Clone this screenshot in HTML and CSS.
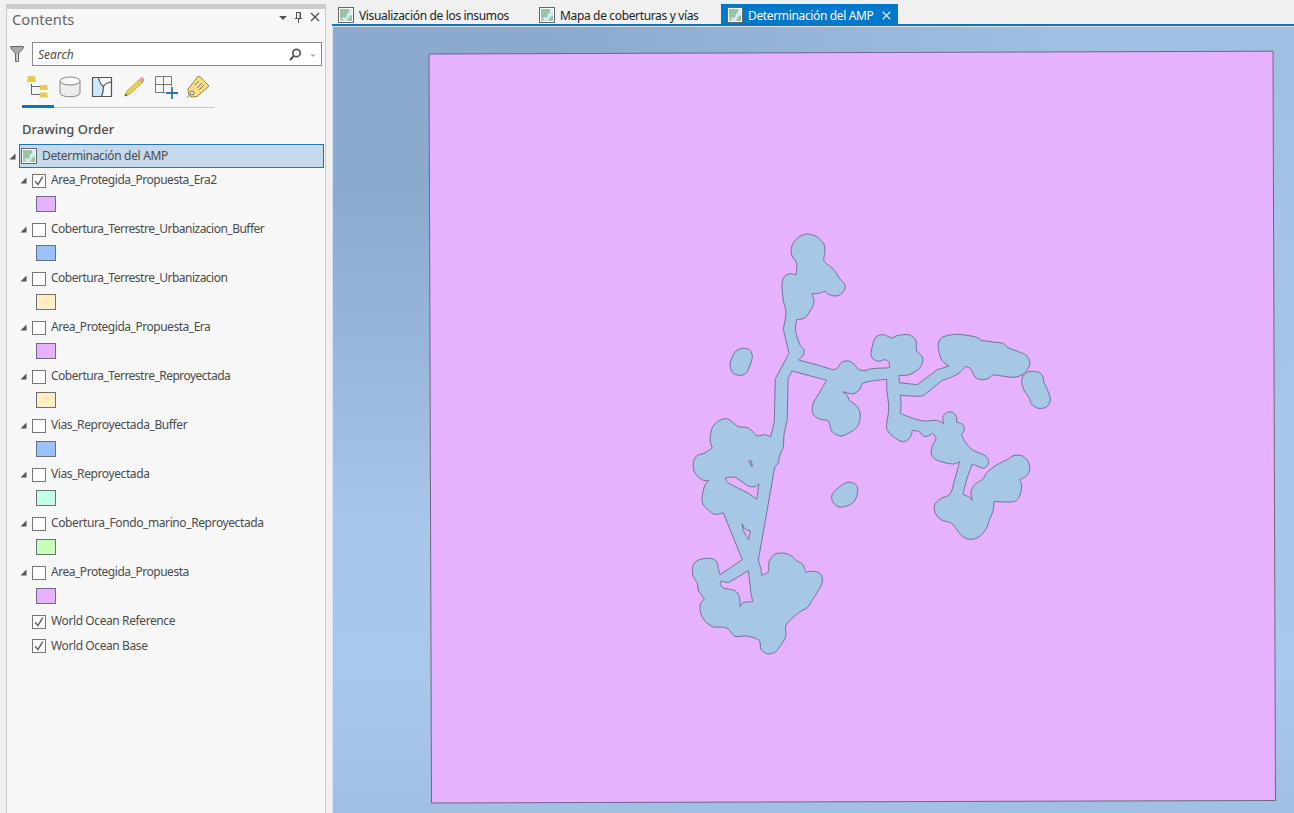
FILE: index.html
```html
<!DOCTYPE html>
<html lang="es">
<head>
<meta charset="utf-8">
<title>Determinación del AMP</title>
<link rel="stylesheet" href="styles.css">
</head>
<body>
<svg class="defs" width="0" height="0">
  <symbol id="map" viewBox="0 0 16 16">
    <rect x=".5" y=".5" width="15" height="15" fill="#fff" stroke="#666"/>
    <rect x="2" y="2" width="12" height="12" fill="#9dc3a4"/>
    <path d="M11 2h3v6l-3 2-2 4H6l-2-2 1-2 3 1 1-4 2-2z" fill="#d3edf5"/>
    <path d="M2 10l3 2v2H2z" fill="#b5d3b4"/>
  </symbol>
  <symbol id="tri" viewBox="0 0 7 7"><path d="M6.5 .5v6h-6z" fill="#555"/></symbol>
  <symbol id="check" viewBox="0 0 14 14"><path d="M3 7.2l3 3.3 4.7-7.8" fill="none" stroke="#666" stroke-width="1.5"/></symbol>
</svg>
<div class="app">
  <aside class="pane">
    <header class="pane-head">
      <h1>Contents</h1>
      <svg class="pane-btns" width="42" height="14" viewBox="0 0 42 14" fill="none" stroke="#555">
        <path d="M1 6h8l-4 4z" fill="#555" stroke="none"/>
        <path d="M18.5 2v6M22.5 2v6M18 2.5h5M17 8.5h7M20.500 9v4"/><path d="M22 2v6" />
        <path d="M33 3l8 8M41 3l-8 8" stroke-width="1.4"/>
      </svg>
    </header>
    <div class="search-row">
      <svg width="14" height="18" viewBox="0 0 14 18"><path d="M.7 1.5h12.600v1.500L8.500 8.500v8h-3v-8L.7 3z" fill="#aaa" stroke="#666"/><path d="M6.700 9h1v7h-1z" fill="#eee"/></svg>
      <div class="search">
        <span>Search</span>
        <svg width="28" height="14" viewBox="0 0 28 14" fill="none"><circle cx="8.500" cy="5" r="3.700" stroke="#555" stroke-width="1.700"/><path d="M5.800 8L2 12" stroke="#555" stroke-width="2"/><path d="M22.500 6.500h5l-2.500 2.500z" fill="#aaa"/></svg>
      </div>
    </div>
    <nav class="tools">
      <span class="tool active"><svg viewBox="0 0 24 24"><path d="M7.500 9v10.500H16M7.500 11.500H16" fill="none" stroke="#666"/><path d="M4 1h7l1 6H3zM16 10h7l1 5h-8.500zM16 17.500h7l1 5h-8.500z" fill="#e3cc52"/></svg></span>
      <span class="tool"><svg viewBox="0 0 24 24"><path d="M2 6v12c0 5 20 5 20 0V6" fill="#ececec" stroke="#888"/><ellipse cx="12" cy="6" rx="10" ry="4" fill="#f9f9f9" stroke="#888"/></svg></span>
      <span class="tool"><svg viewBox="0 0 24 24"><path d="M2.500 2.500h19v19h-19z" fill="#f8f8f8"/><path d="M2.500 2.500h6q1 6 5 8-1 6-2 11h-9z" fill="#cfe7fa"/><path d="M2.500 2.500h19v19h-19zM8.500 2.500q1 6 5 9 2-4 8-4.500M13.500 11.500q0 5-2 10" fill="none" stroke="#555" stroke-width="1.200"/></svg></span>
      <span class="tool"><svg viewBox="0 0 24 24"><path d="M3 21l2-5L17.500 4.500l3 3L8 19z" fill="#e6d152" stroke="#b7a341" stroke-width=".8"/><path d="M17.500 4.500l2-2q2 0 2.500 2.500l-1.500 2.500z" fill="#e5a7a0" stroke="#a66" stroke-width=".5"/><path d="M2.500 21.500l1-3 2 2z" fill="#555"/></svg></span>
      <span class="tool"><svg viewBox="0 0 24 24"><path d="M1.500 1.500h16v16h-16zM9.500 1.500v16M1.500 9.500h16" fill="none" stroke="#777"/><path d="M11 11h9v4h4v5h-4v4h-5v-4h-4z" fill="#f7f7f7"/><path d="M18 12v12M12 18h12" stroke="#2b7aa5" stroke-width="1.800"/></svg></span>
      <span class="tool"><svg viewBox="0 0 24 24"><path d="M2 14l.5 5.500 2.500 2.500 6-.5L23 11 22 10 14 1.500h-2z" fill="#f5dc86" stroke="#9b8541"/><circle cx="6" cy="18" r="2" fill="#fff" stroke="#666"/><path d="M5 19l-4 3.500M9 10l4-4M11 13l5-5M13 15l5-5" stroke="#777" fill="none"/></svg></span>
    </nav>
    <h2>Drawing Order</h2>
    <div class="root">
      <svg class="tri"><use href="#tri"/></svg>
      <div class="selected"><svg class="mapicon"><use href="#map"/></svg><span>Determinación del AMP</span></div>
    </div>
    <ul class="layers">
      <li><svg class="tri"><use href="#tri"/></svg><i class="box"><svg><use href="#check"/></svg></i><span>Area_Protegida_Propuesta_Era2</span></li>
      <li class="symbol"><b class="swatch pink"></b></li>
      <li><svg class="tri"><use href="#tri"/></svg><i class="box"></i><span class="tight">Cobertura_Terrestre_Urbanizacion_Buffer</span></li>
      <li class="symbol"><b class="swatch blue"></b></li>
      <li><svg class="tri"><use href="#tri"/></svg><i class="box"></i><span class="tight">Cobertura_Terrestre_Urbanizacion</span></li>
      <li class="symbol"><b class="swatch sand"></b></li>
      <li><svg class="tri"><use href="#tri"/></svg><i class="box"></i><span>Area_Protegida_Propuesta_Era</span></li>
      <li class="symbol"><b class="swatch pink"></b></li>
      <li><svg class="tri"><use href="#tri"/></svg><i class="box"></i><span class="tight">Cobertura_Terrestre_Reproyectada</span></li>
      <li class="symbol"><b class="swatch sand"></b></li>
      <li><svg class="tri"><use href="#tri"/></svg><i class="box"></i><span class="loose">Vias_Reproyectada_Buffer</span></li>
      <li class="symbol"><b class="swatch blue"></b></li>
      <li><svg class="tri"><use href="#tri"/></svg><i class="box"></i><span class="loose">Vias_Reproyectada</span></li>
      <li class="symbol"><b class="swatch mint"></b></li>
      <li><svg class="tri"><use href="#tri"/></svg><i class="box"></i><span class="loose">Cobertura_Fondo_marino_Reproyectada</span></li>
      <li class="symbol"><b class="swatch green"></b></li>
      <li><svg class="tri"><use href="#tri"/></svg><i class="box"></i><span>Area_Protegida_Propuesta</span></li>
      <li class="symbol"><b class="swatch pink"></b></li>
      <li class="leaf"><i class="box"><svg><use href="#check"/></svg></i><span class="loose">World Ocean Reference</span></li>
      <li class="leaf"><i class="box"><svg><use href="#check"/></svg></i><span class="loose">World Ocean Base</span></li>
    </ul>
  </aside>
  <main class="view">
    <div class="tabs">
      <div class="tab first"><svg class="mapicon"><use href="#map"/></svg><span>Visualización de los insumos</span></div>
      <div class="tab second"><svg class="mapicon"><use href="#map"/></svg><span>Mapa de coberturas y vías</span></div>
      <div class="tab current"><svg class="mapicon"><use href="#map"/></svg><span>Determinación del AMP</span><svg class="close" viewBox="0 0 9 9"><path d="M.7.7l7.600 7.600M8.300.7L.7 8.300" stroke="#d9ecfa" stroke-width="1.300"/></svg></div>
    </div>
    <svg class="canvas" viewBox="332 26 962 787">
      <defs>
        <linearGradient id="sea" x1="0" y1="0" x2="0" y2="1">
          <stop offset="0" stop-color="#a0c0e2"/><stop offset=".55" stop-color="#a7c6e9"/><stop offset=".82" stop-color="#a8c8ec"/><stop offset="1" stop-color="#a1bfe3"/>
        </linearGradient>
        <radialGradient id="deep" gradientUnits="userSpaceOnUse" cx="0" cy="0" r="1" gradientTransform="translate(380 70) scale(680 460)">
          <stop offset="0" stop-color="#8baacd"/><stop offset=".25" stop-color="#8baacd"/><stop offset="1" stop-color="#8baacd" stop-opacity="0"/>
        </radialGradient>
      </defs>
      <rect x="332" y="26" width="962" height="787" fill="url(#sea)"/>
      <rect x="332" y="26" width="962" height="787" fill="url(#deep)"/>
      <path d="M332 26.500H1294M332.500 26V813" stroke="#d5e2ef" fill="none"/>
      <path d="M429 54L1273 51.200 1275.500 800.500 431.500 803z" fill="#e6b1fd" stroke="#756582" stroke-width="1"/>
      <g id="features" stroke="#6b6983" stroke-width=".9" stroke-linejoin="round"></g>
    </svg>
  </main>
</div>
<script src="map.js"></script>
</body>
</html>
```
FILE: styles.css
```css
* { box-sizing: border-box; }
body { margin: 0; height: 813px; overflow: hidden; background: #f0f0f0; color: #4c4c4c; font: 12px "Noto Sans", "Open Sans", sans-serif; }
svg { display: block; flex: none; }
.defs { position: absolute; }
.app { display: flex; height: 813px; padding-left: 6px; }
.pane { width: 320px; margin-top: 4px; border: 1px solid #ccc; border-top: 5px solid #cbcbcb; border-bottom: 0; background: #f7f7f7; }
.pane-head { display: flex; justify-content: space-between; height: 33px; padding: 0 5px 0 5px; }
.pane-btns { margin-top: 1px; }
h1 { margin: 0; font-size: 14.7px; line-height: 20px; font-weight: 400; color: #666; }
.search-row { display: flex; align-items: center; gap: 7px; height: 24px; padding-left: 3px; }
.search-row > svg { margin-right: 1px; }
.search { display: flex; align-items: center; justify-content: space-between; width: 290px; height: 24px; padding: 1px 5px 0; border: 1px solid #8a8a8a; background: #fff; font-style: italic; font-size: 12px; }
.tools { display: flex; width: 192px; height: 42px; margin-left: 15px; padding-top: 9px; border-bottom: 1px solid #c6c6c6; }
.tool { width: 32px; height: 33px; padding-left: 4px; }
.tool svg { width: 24px; height: 24px; }
.tool.active { padding-left: 2px; border-bottom: 3px solid #0b76b7; }
h2 { margin: 0; padding: 11px 0 0 15px; height: 36px; line-height: 20px; font-size: 13px; font-weight: 500; }
.root { display: flex; align-items: center; gap: 3px; padding-left: 2px; height: 24px; }
.tri { width: 7px; height: 7px; }
.selected { display: flex; align-items: center; gap: 5px; width: 305px; height: 24px; padding: 0 0 1px 1px; border: 1px solid #1a78b6; background: #c5d9eb; letter-spacing: -.33px; }
.selected .mapicon { margin-top: 1px; }
.mapicon { width: 16px; height: 16px; }
.layers { margin: 0; padding: 0; list-style: none; }
.layers li { display: flex; align-items: center; height: 24.500px; padding-left: 13px; }
.layers span { margin: -1px 0 0 5px; letter-spacing: -.47px; }
.layers .tight { letter-spacing: -.51px; }
.layers .loose { letter-spacing: -.4px; }
.box { display: block; width: 14px; height: 14px; margin: 1px 0 0 5px; border: 1px solid #777; background: #fff; }
.box svg { width: 14px; height: 14px; margin: -1px; }
.layers .leaf { padding-left: 20px; }
.layers .symbol { padding: 0 0 2px 29px; }
.swatch { width: 20px; height: 16px; border: 1px solid #6e6e7a; }
.pink { background: #e6b1fd; }
.blue { background: #9ac1ff; }
.sand { background: #ffefc2; }
.mint { background: #c2ffe4; }
.green { background: #c6ffb9; }
.view { width: 962px; margin-left: 6px; }
.tabs { display: flex; height: 26px; padding-top: 4px; border-bottom: 2px solid #0b76bd; color: #222; letter-spacing: -.35px; }
.tab { display: flex; align-items: center; gap: 5px; height: 20px; padding: 2px 0 0 6px; white-space: nowrap; }
.first { width: 201px; }
.second { width: 188px; }
.current { width: 177px; color: #fff; background: #0078cc; }
.close { width: 9px; height: 9px; margin-left: 3px; }
.canvas { width: 962px; height: 787px; }
```
FILE: map.js
```js
// Vertex lists in map-view pixels, x y pairs.
const water = "#a7c7e7", area = "#e6b1fd";
const features = [
  [water, `808.3 234 816.7 236.7 824.3 245 824.7 253.3 824 260.7 833.3 269.3 840 279 844.7 284.3 844.7 289 840.7 294.3 835 296 828.3 294.3 825 291.3 819.3 293.3 812 293.7 814 302.3 810.7 310 805 317.7 796.7 319.7 795.3 329.7 800 345 804 350 803.3 355 798.7 360
   820 365.7 833.3 369.7 837.3 368.3 841.7 362.3 848.3 361 854.3 364.3 857.3 368.3 863.3 370.7 871.7 368.7 889.3 367.8
   889 362.3 885 359.7 879.3 361.3 873.3 359 871 354.3 872.7 345 876 337 883.3 334.7 891.7 338 896 336 908.3 334.7 915.7 340 916.7 351 922.7 357.7 920.7 366.7 915 371.7 908.3 375 899 375.3 899.3 382.7 917.3 384.7 936.7 370 949 366
   941.7 360 938 345 941.7 337.7 956.7 334.3 976.7 337.3 980.7 340.3 1003.3 343.3 1009 348 1026.7 355.7 1029.7 364.3 1023.3 374 1013.3 377.3 993.3 375 988.3 378.3 981.7 379.7 975 377 971 369 965.3 366.3 960 372.3 951.7 377 941.7 380.7 923.3 395.7 918.3 396.3 900.3 395.3 901 405 900.3 413.3 910 417.3 923.3 421 936.7 420.3 943.7 424
   943 416.7 947.3 412.3 953.3 412.7 956.7 417.7 956.3 422 963.3 425 964 431 961.3 434 965 441.7 971.7 449.3 986 456.3 988.7 462.3 984.7 468 980 467.3 972.3 464 966 481.7 963 494.3 968.3 496.7 972.3 500.3 971 491.7 975 484.3 983.3 478.7 986.7 472.7 996.7 465 1008.3 459 1013.3 455.7 1021.7 455.7 1027.7 461 1029.7 469 1026.7 475.7 1019.7 479.7
   1021.7 485 1020 495 1015.7 501 1006.7 502 994 501.3 993.3 510 990 518.3 986 529 978.3 537.3 970 539.3 961.7 535.7 951.7 523.3 941.7 520 935.3 513.3 934.7 505 940 499 950 494 955 478.3 959.7 461.7 953.3 464 938.3 460.7 931.7 455 932 446.7 936 438.3 932.3 433.3 925 436.7 919.3 431.7 912.3 430.3 910 437.7 903.3 441.7 893.3 436.7 886.7 428.3 888.7 408.3 886.7 388.3 886.7 379.3
   871.7 381 862.3 383.7 860 389 853.3 393.7 842.7 391.7 847.3 395.7 849.3 400.3 857.3 406.7 860.3 415 857.3 426.7 848.3 433.3 840 436 831.7 431 828.3 421 820 419.3 813.3 414.3 812.7 405 820 391.7 826.7 380.3 792 371 788 379 787.3 420 784 435 783.3 446.7 779.3 456.7 778.3 462.7 774.7 467.3 767 511 758.3 560
   760.7 568.3 761.7 575.3 768.3 571.7 769 561.7 774 554.7 781.7 553 790 555 796.7 560.7 802.3 564 806 572.3 813.3 571.3 820.7 574.3 822.3 581.7 818.3 590.7 812.7 599.3 807.3 607.7 800.7 611.3 786 625 785.7 636.7 779.3 647.3 775 652.3 767.3 653.7 761 649.3 759.3 640.7 746.7 636 735 636.3 728.3 629 720.7 627 713.3 627 705 621 700.3 611.7 700.7 603.3 704.3 599.3 698.3 590 697.3 583.3 692.7 575 693.3 565 698.3 560 710 558.3 716.7 561.7 718.3 568.3 720 574.7 742.3 559.7
   723.3 512.7 715 514.3 708.3 510 702.7 503.3 702.3 496 705 485 708.7 480.3 703.3 480.3 695 473.3 693.3 463.3 696.7 456 704 453.3 712.3 447.7 710 440 712.7 426.7 719.3 420.7 726.7 418.7 734 423.3 738.3 426.7 748.3 428 757.3 435.7 765 434.7 770.7 436.7 774.3 421.7 775.3 379 789 353.3 783.3 329 786 312.3 783.3 300 782 284.3 784.3 276.7 790 273.7 796 275 796.7 263.3 791.7 255 791.7 246.7 796.7 239 803.3 234.7`],
  [area, "725.7 477.7 735 477.3 748.3 486 755 486.7 759 484 756.7 499.3 748.3 493.3 738.3 488.3 726.7 481.7"],
  [area, "748.7 461 751.5 461 752.3 467"],
  [area, "742 523.7 745.3 529 750.3 530.7 748.7 539.7 744 531.7"],
  [area, "721 581 728.3 582.7 748.3 570.7 751 593.3 752.7 601.7 743.3 602.7 740 606.7 739.3 596.7 735 590.7 723.3 588 720.3 584.3"],
  [water, "730 365 731 360 736 351 743.3 348.3 750 350.3 752.3 356.7 750 365 746 373.3 740 375.3 732.7 372.7"],
  [water, "831.7 496 834 491.7 843.3 484 850 482.3 856.7 485.7 857.3 493.3 854 501.7 846.7 506 838.3 506.7 832.7 501.7"],
  [water, "1021.7 380 1025.7 373.3 1033.3 371.3 1041.7 374.3 1044 382.3 1048.3 391.7 1050.3 400 1046.7 406.7 1038.3 408.3 1031.7 404.3 1029.3 398.3 1024 390"]
];

// Rounds gentle bends with cubic handles and leaves sharp corners as they are.
function outline(text) {
  const n = text.trim().split(/\s+/).map(Number), p = [];
  for (let i = 0; i < n.length; i += 2) p.push([n[i], n[i + 1]]);
  const handles = p.map((c, i) => {
    const a = p[(i + p.length - 1) % p.length], b = p[(i + 1) % p.length];
    const u = [c[0] - a[0], c[1] - a[1]], v = [b[0] - c[0], b[1] - c[1]];
    const lu = Math.hypot(...u), lv = Math.hypot(...v);
    const cos = (u[0] * v[0] + u[1] * v[1]) / (lu * lv);
    if (cos < 0.4 || Math.max(lu, lv) > 22) return [0, 0];
    const t = [u[0] / lu + v[0] / lv, u[1] / lu + v[1] / lv], k = Math.min(lu, lv) * 0.34 / Math.hypot(...t);
    return [t[0] * k, t[1] * k];
  });
  let d = "M" + p[0];
  p.forEach((c, i) => {
    const j = (i + 1) % p.length, e = p[j], h = handles[i], g = handles[j];
    d += `C${c[0] + h[0]} ${c[1] + h[1]} ${e[0] - g[0]} ${e[1] - g[1]} ${e}`;
  });
  return d + "z";
}

const layer = document.getElementById("features");
for (const [fill, points] of features) {
  const path = document.createElementNS("http://www.w3.org/2000/svg", "path");
  path.setAttribute("d", outline(points));
  path.setAttribute("fill", fill);
  layer.append(path);
}
```
